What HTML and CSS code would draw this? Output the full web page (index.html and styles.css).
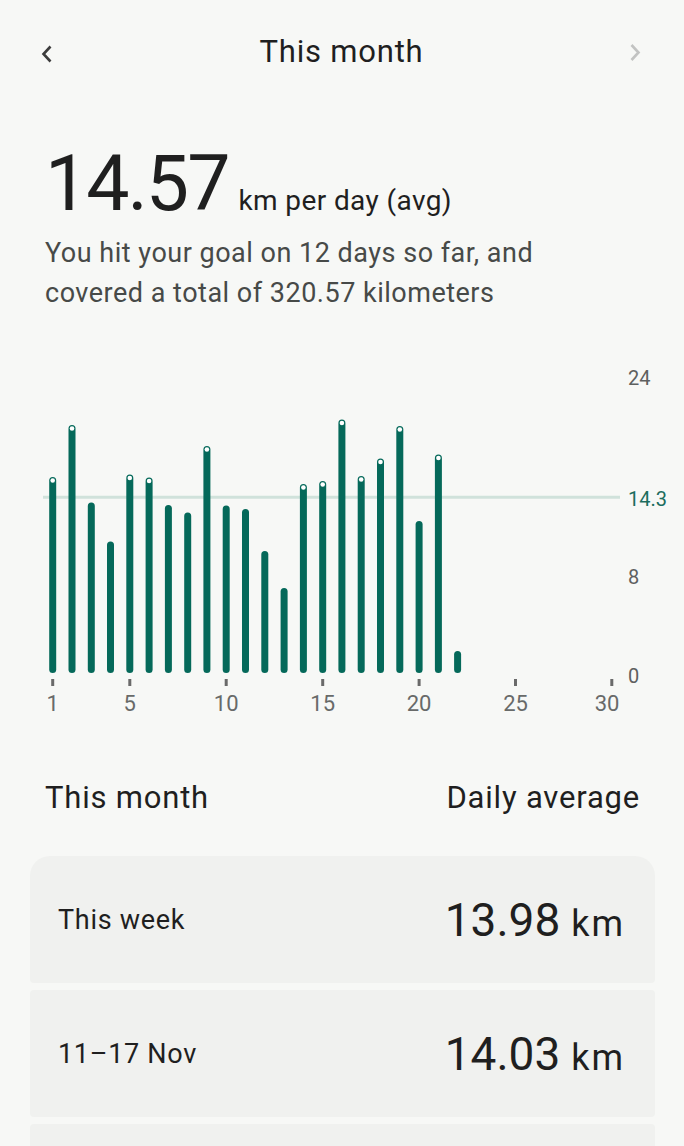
FILE: index.html
```html
<!DOCTYPE html>
<html lang="en">

<head>
    <meta charset="UTF-8">
    <meta name="viewport" content="width=device-width, initial-scale=1.0">
    <title>This month</title>
    <link rel="stylesheet" href="styles.css">
</head>

<body>
    <header class="topbar">
        <button class="nav-btn">
            <svg width="20" height="24" viewBox="0 0 20 24"><polyline points="10.5,6.5 3.5,14 10.5,21.5" /></svg>
        </button>
        <h1 class="title">This month</h1>
        <button class="nav-btn nav-btn--off">
            <svg width="20" height="24" viewBox="0 0 20 24"><polyline points="8.5,5 15.5,12.5 8.5,20" /></svg>
        </button>
    </header>

    <section class="summary">
        <div class="summary-main">
            <span class="big-num">14.57</span>
            <span class="big-unit">km per day (avg)</span>
        </div>
        <p class="summary-text">You hit your goal on 12 days so far, and covered a total of 320.57 kilometers</p>
    </section>

    <svg class="chart" width="684" height="390" viewBox="0 340 684 390">
        <!-- goal line -->
        <line class="goal" x1="43" y1="497.3" x2="620" y2="497.3" />

        <g class="bars">
            <rect x="49.2" y="477" width="7" height="196" rx="3.5" />
            <rect x="68.5" y="425" width="7" height="248" rx="3.5" />
            <rect x="87.8" y="502.5" width="7" height="170.5" rx="3.5" />
            <rect x="107" y="541.5" width="7" height="131.5" rx="3.5" />
            <rect x="126.3" y="474.5" width="7" height="198.5" rx="3.5" />
            <rect x="145.6" y="477.5" width="7" height="195.5" rx="3.5" />
            <rect x="164.9" y="505" width="7" height="168" rx="3.5" />
            <rect x="184.2" y="512.5" width="7" height="160.5" rx="3.5" />
            <rect x="203.4" y="446" width="7" height="227" rx="3.5" />
            <rect x="222.7" y="505.5" width="7" height="167.5" rx="3.5" />
            <rect x="242" y="509" width="7" height="164" rx="3.5" />
            <rect x="261.3" y="551" width="7" height="122" rx="3.5" />
            <rect x="280.6" y="588" width="7" height="85" rx="3.5" />
            <rect x="299.9" y="484" width="7" height="189" rx="3.5" />
            <rect x="319.2" y="481" width="7" height="192" rx="3.5" />
            <rect x="338.4" y="419.5" width="7" height="253.5" rx="3.5" />
            <rect x="357.7" y="476" width="7" height="197" rx="3.5" />
            <rect x="377" y="458.5" width="7" height="214.5" rx="3.5" />
            <rect x="396.3" y="426" width="7" height="247" rx="3.5" />
            <rect x="415.6" y="521" width="7" height="152" rx="3.5" />
            <rect x="434.9" y="454.5" width="7" height="218.5" rx="3.5" />
            <rect x="454.1" y="651" width="7" height="22" rx="3.5" />
        </g>

        <!-- goal reached markers -->
        <g class="dots">
            <circle cx="52.7" cy="480.5" r="2.3" />
            <circle cx="72" cy="428.5" r="2.3" />
            <circle cx="129.8" cy="478" r="2.3" />
            <circle cx="149.1" cy="481" r="2.3" />
            <circle cx="206.9" cy="449.5" r="2.3" />
            <circle cx="303.4" cy="487.5" r="2.3" />
            <circle cx="322.7" cy="484.5" r="2.3" />
            <circle cx="341.9" cy="423" r="2.3" />
            <circle cx="361.2" cy="479.5" r="2.3" />
            <circle cx="380.5" cy="462" r="2.3" />
            <circle cx="399.8" cy="429.5" r="2.3" />
            <circle cx="438.4" cy="458" r="2.3" />
        </g>

        <g class="ticks">
            <line x1="52.7" y1="679" x2="52.7" y2="686" />
            <line x1="129.8" y1="679" x2="129.8" y2="686" />
            <line x1="226.2" y1="679" x2="226.2" y2="686" />
            <line x1="322.7" y1="679" x2="322.7" y2="686" />
            <line x1="419.1" y1="679" x2="419.1" y2="686" />
            <line x1="515.5" y1="679" x2="515.5" y2="686" />
            <line x1="611.8" y1="679" x2="611.8" y2="686" />
        </g>

        <g class="x-labels">
            <text x="52.7" y="711">1</text>
            <text x="129.8" y="711">5</text>
            <text x="226.2" y="711">10</text>
            <text x="322.7" y="711">15</text>
            <text x="419.1" y="711">20</text>
            <text x="515.5" y="711">25</text>
            <text x="607" y="711">30</text>
        </g>

        <g class="y-labels">
            <text x="628" y="385">24</text>
            <text class="goal-label" x="628" y="506">14.3</text>
            <text x="628" y="584">8</text>
            <text x="628" y="683">0</text>
        </g>
    </svg>

    <div class="list-head">
        <span>This month</span>
        <span>Daily average</span>
    </div>

    <div class="list">
        <div class="row row--first">
            <span class="row-label">This week</span>
            <span class="row-value"><span class="row-num">13.98</span> km</span>
        </div>
        <div class="row">
            <span class="row-label">11–17 Nov</span>
            <span class="row-value"><span class="row-num">14.03</span> km</span>
        </div>
        <div class="row"></div>
    </div>
</body>

</html>
```

FILE: styles.css
```css
body {
    margin: 0;
    background-color: #f7f8f6;
    font-family: Roboto, "Noto Sans", sans-serif;
    color: #1f1f1f;
    overflow: hidden;
}

.topbar {
    display: flex;
    align-items: center;
    justify-content: space-between;
    height: 104px;
    padding: 0 41px 0 40px;
}

.title {
    margin: 0;
    font-size: 31px;
    font-weight: 400;
    line-height: 36px;
    letter-spacing: 0.8px;
}

.nav-btn {
    background: none;
    border: none;
    padding: 0;
    width: 20px;
    height: 24px;
}

.nav-btn polyline {
    fill: none;
    stroke: #3c3c3c;
    stroke-width: 2.6;
}

.nav-btn--off polyline {
    stroke: #c2c3c2;
}

.summary {
    padding: 41px 45px 0;
}

.summary-main {
    display: flex;
    align-items: baseline;
    gap: 10px;
}

.big-num {
    font-size: 77px;
    line-height: 78px;
    letter-spacing: -2px;
}

.big-unit {
    font-size: 28px;
    letter-spacing: 0.4px;
}

.summary-text {
    margin: 10px 0 0;
    font-size: 27px;
    line-height: 40px;
    letter-spacing: 0.5px;
    color: #474a48;
    max-width: 540px;
}

.chart {
    display: block;
    margin-top: 27px;
}

.goal {
    stroke: #d0e2db;
    stroke-width: 3;
}

.bars rect {
    fill: #05695a;
}

.dots circle {
    fill: #ffffff;
}

.ticks line {
    stroke: #6a6a6a;
    stroke-width: 3;
}

.x-labels text {
    font-size: 22px;
    fill: #686a69;
    text-anchor: middle;
}

.y-labels text {
    font-size: 20px;
    fill: #5e605f;
}

.y-labels .goal-label {
    fill: #1c6d5e;
}

.list-head {
    display: flex;
    justify-content: space-between;
    padding: 50px 44px 0 45px;
    font-size: 31px;
    line-height: 36px;
    letter-spacing: 0.8px;
}

.list {
    display: flex;
    flex-direction: column;
    gap: 7px;
    margin: 40px 29px 0 30px;
}

.row {
    display: flex;
    align-items: center;
    justify-content: space-between;
    height: 127px;
    padding: 0 30px 0 28px;
    background-color: #f0f1ef;
    border-radius: 4px;
}

.row--first {
    border-radius: 20px 20px 4px 4px;
}

.row-label {
    font-size: 27px;
    letter-spacing: 0.7px;
}

.row-value {
    font-size: 36px;
    letter-spacing: 2px;
}

.row-num {
    font-size: 46px;
    letter-spacing: 0;
}
```
